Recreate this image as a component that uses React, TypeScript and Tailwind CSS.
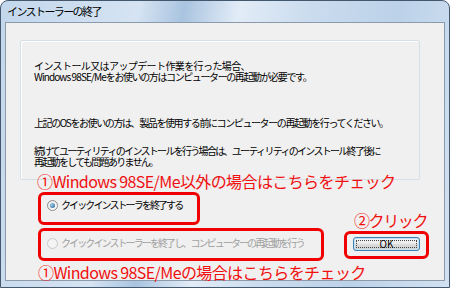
const jp = { fontFamily: '"Noto Sans CJK JP", "Noto Sans", sans-serif' };

function Radio({ checked, disabled }: { checked?: boolean; disabled?: boolean }) {
  return (
    <span
      className={
        "flex h-[11px] w-[11px] shrink-0 items-center justify-center rounded-full border " +
        (disabled ? "border-[#c9c9c9] bg-[#f4f4f4]" : "border-[#8a8a8a] bg-[linear-gradient(135deg,#e6e6e6,#ffffff)]")
      }
    >
      {checked && <span className="h-[5px] w-[5px] rounded-full bg-[radial-gradient(circle_at_35%_35%,#9fd0f0,#1d5a8a)]" />}
    </span>
  );
}

export default function App() {
  return (
    <div className="relative flex h-[288px] w-[450px] flex-col overflow-hidden rounded-t-[8px] border border-[#44586d] bg-[linear-gradient(100deg,#c3d7ec_0%,#d5e3f2_28%,#a9c4e0_37%,#e2ecf7_48%,#cbdcee_62%,#bcd2e9_80%,#d2e1f1_100%)]" style={jp}>
      <div className="flex h-[21px] shrink-0 items-center pl-[6px] text-[11px] tracking-[-1.6px] text-black">
        インストーラーの終了
      </div>
      <div className="flex flex-1 flex-col px-[4px] pb-[6px]">
        <div className="flex h-[259px] flex-col border border-[#8b9bab] bg-[#f0f0f0]">
          <div className="ml-[14px] mt-[17px] h-[140px] w-[400px] rounded-[2px] border border-[#d5dfe5] pl-[13px] pt-[19px] text-[10px] leading-[11px] tracking-[-1.4px] text-black shadow-[inset_1px_1px_0_#ffffff]">
            <p className="whitespace-nowrap">
              <span className="tracking-[-0.6px]">インストール又はアップデート作業を行った場合、</span>
              <br />
              <span className="tracking-[-0.9px]">Windows 98SE/Me</span>をお使いの方はコンピューターの再起動が必要です。
            </p>
            <p className="mt-[35px]">上記のOSをお使いの方は、製品を使用する前にコンピューターの再起動を行ってください。</p>
            <p className="mt-[17px] whitespace-nowrap tracking-[-1.7px]">
              続けてユーティリティのインストールを行う場合は、ユーティリティのインストール終了後に
              <br />
              再起動をしても問題ありません。
            </p>
          </div>
          <div className="flex">
            <div className="ml-[41px] mt-[18px] flex flex-col gap-[24px] text-[10px] leading-[14px] tracking-[-1.9px]">
              <div className="flex items-center gap-[3px] text-black">
                <Radio checked />
                <span>クイックインストーラを終了する</span>
              </div>
              <div className="flex items-center gap-[3px] text-[#a0a0a0]">
                <Radio disabled />
                <span>クイックインストーラーを終了し、コンピューターの再起動を行う</span>
              </div>
            </div>
            <button className="ml-auto mr-[24px] mt-[57px] flex h-[14px] w-[67px] items-center justify-center rounded-[3px] border border-[#3c7fb1] bg-[linear-gradient(#f3f3f3_0%,#ebebeb_50%,#dcdcdc_51%,#cfcfcf_100%)] p-[2px] shadow-[inset_0_0_0_1px_#bfe3f7]">
              <span className="flex h-full w-full items-center justify-center border border-dotted border-[#444] text-[10px] leading-[8px] text-black">OK</span>
            </button>
          </div>
        </div>
      </div>

      <div className="absolute left-[36px] top-[172px] text-[16px] leading-[16px] tracking-[-0.6px] text-[#f01010]">①Windows 98SE/Me以外の場合はこちらをチェック</div>
      <div className="absolute left-[37px] top-[191px] h-[33px] w-[162px] rounded-[6px] border-[3px] border-[#f00000]" />
      <div className="absolute left-[37px] top-[227px] h-[33px] w-[286px] rounded-[6px] border-[3px] border-[#f00000]" />
      <div className="absolute left-[353px] top-[211px] text-[16px] leading-[16px] tracking-[-1.4px] text-[#f01010]">②クリック</div>
      <div className="absolute left-[343px] top-[230px] h-[28px] w-[85px] rounded-[6px] border-[3px] border-[#f00000]" />
      <div className="absolute left-[37px] top-[263px] text-[16px] leading-[16px] tracking-[-0.6px] text-[#f01010]">①Windows 98SE/Meの場合はこちらをチェック</div>
    </div>
  );
}
